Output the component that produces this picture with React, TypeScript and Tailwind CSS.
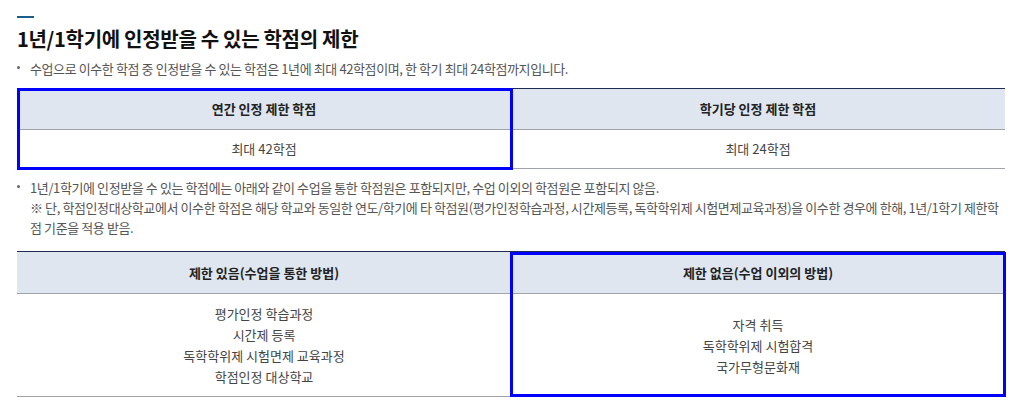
import React from "react";

const font = { fontFamily: '"Noto Sans CJK KR", "Noto Sans", sans-serif' };

const Bullet: React.FC<{ children: React.ReactNode }> = ({ children }) => (
  <div className="flex">
    <span className="w-[13px] shrink-0 pt-[7px]">
      <span className="block w-[3px] h-[3px] rounded-full bg-[#666]" />
    </span>
    <div>{children}</div>
  </div>
);

const limitRows = ["평가인정 학습과정", "시간제 등록", "독학학위제 시험면제 교육과정", "학점인정 대상학교"];
const freeRows = ["자격 취득", "독학학위제 시험합격", "국가무형문화재"];

export default function App() {
  return (
    <div className="w-[1022px] h-[415px] bg-white px-[17px] pt-[16px] text-[#555]" style={font}>
      {/* 제목 */}
      <div className="h-[2px] w-[17px] bg-[#1b5e8a]" />
      <h2 className="mt-[7px] text-[20px] leading-[28px] font-bold text-[#111] tracking-[-0.3px]">
        1년/1학기에 인정받을 수 있는 학점의 제한
      </h2>

      <div className="mt-[6px] text-[13px] leading-[20px] tracking-[-0.4px]">
        <Bullet>수업으로 이수한 학점 중 인정받을 수 있는 학점은 1년에 최대 42학점이며, 한 학기 최대 24학점까지입니다.</Bullet>
      </div>

      {/* 표 1 */}
      <div className="relative mt-[9px] border-t border-[#1e2d4f] border-b border-b-[#a0a4aa] text-[13px]">
        <div className="grid grid-cols-2 bg-[#dfe6f0] h-[41px] items-center text-center font-bold text-[#222] border-b border-[#a0a4aa]">
          <div>연간 인정 제한 학점</div>
          <div>학기당 인정 제한 학점</div>
        </div>
        <div className="grid grid-cols-2 h-[38px] items-center text-center text-[#444]">
          <div>최대 42학점</div>
          <div>최대 24학점</div>
        </div>
        <div className="pointer-events-none absolute -top-px -bottom-[2px] left-0 w-[calc(50%+2px)] border-[3px] border-[#0000ff]" />
      </div>

      <div className="mt-[9px] text-[13px] leading-[20px] tracking-[-0.4px]">
        <Bullet>
          <p>1년/1학기에 인정받을 수 있는 학점에는 아래와 같이 수업을 통한 학점원은 포함되지만, 수업 이외의 학점원은 포함되지 않음.</p>
          <p className="whitespace-nowrap">
            ※ 단, 학점인정대상학교에서 이수한 학점은 해당 학교와 동일한 연도/학기에 타 학점원(평가인정학습과정, 시간제등록, 독학학위제 시험면제교육과정)을 이수한 경우에 한해, 1년/1학기 제한학
            <br />
            점 기준을 적용 받음.
          </p>
        </Bullet>
      </div>

      {/* 표 2 */}
      <div className="relative mt-[13px] border-t border-[#1e2d4f] border-b border-b-[#a0a4aa] text-[13px]">
        <div className="grid grid-cols-2 bg-[#dfe6f0] h-[42px] items-center text-center font-bold text-[#222] border-b border-[#a0a4aa]">
          <div>제한 있음(수업을 통한 방법)</div>
          <div>제한 없음(수업 이외의 방법)</div>
        </div>
        <div className="grid grid-cols-2 h-[102px] items-center text-center text-[#444] leading-[21px]">
          <div>
            {limitRows.map((r) => (
              <div key={r}>{r}</div>
            ))}
          </div>
          <div>
            {freeRows.map((r) => (
              <div key={r}>{r}</div>
            ))}
          </div>
        </div>
        <div className="pointer-events-none absolute top-0 -bottom-px left-[calc(50%-1px)] -right-px border-[3px] border-[#0000ff]" />
      </div>
    </div>
  );
}
